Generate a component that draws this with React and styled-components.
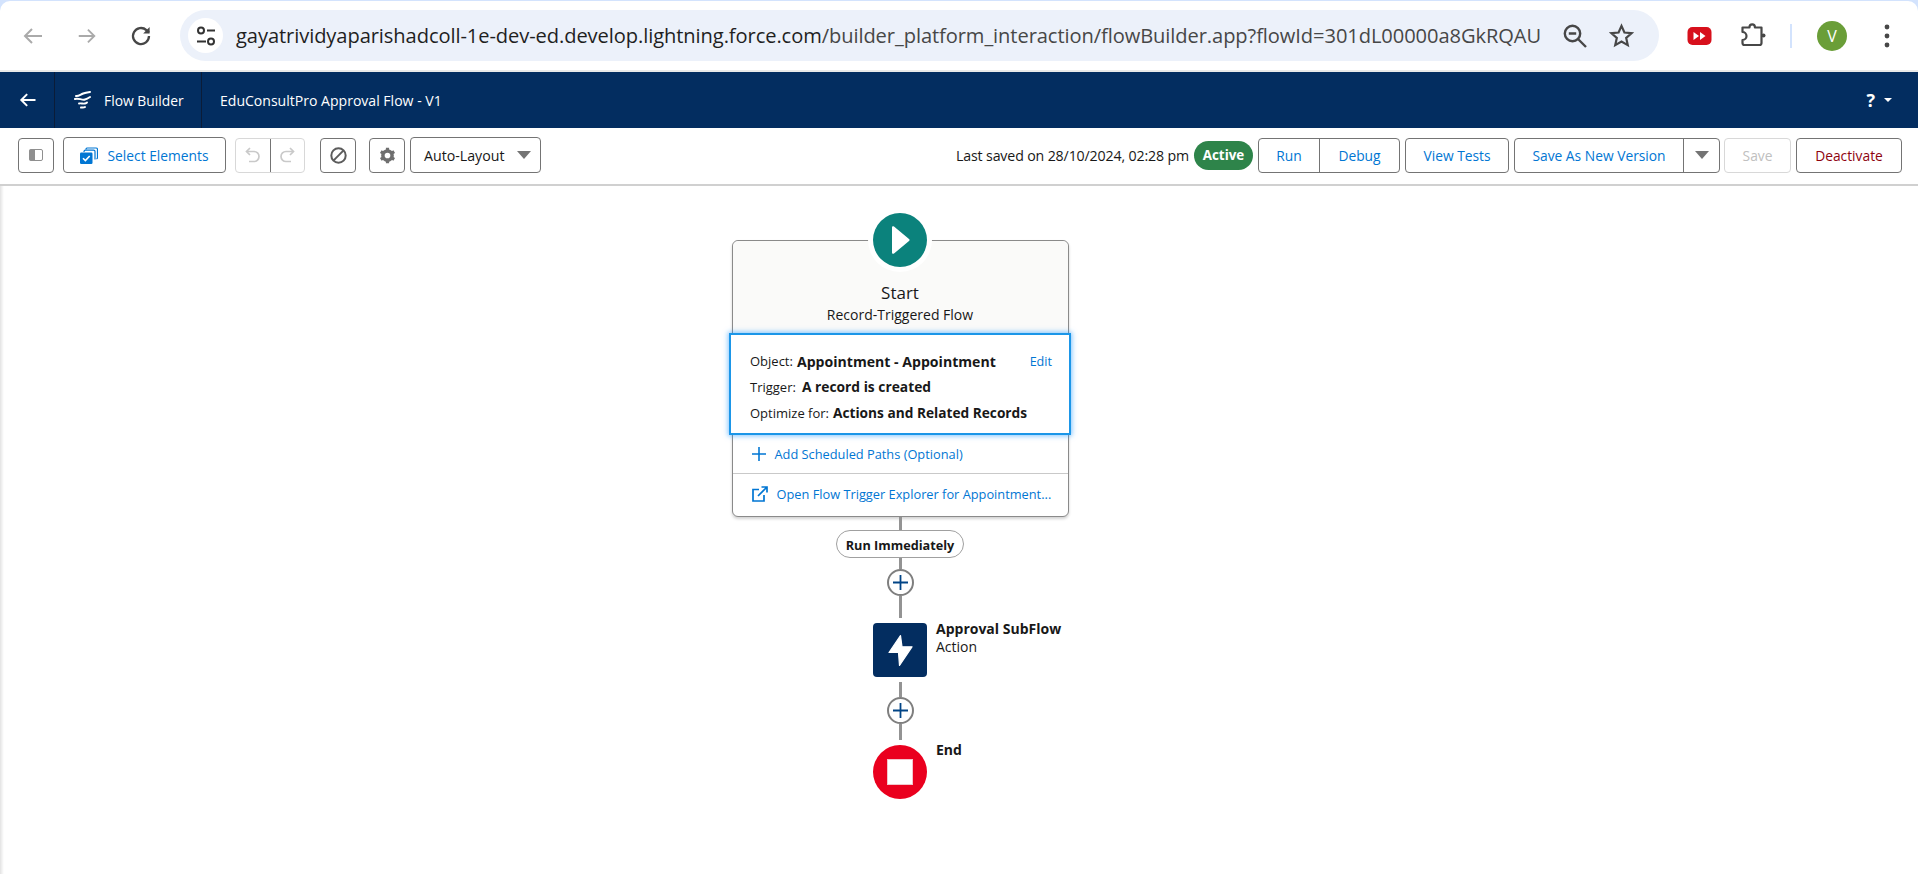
import React from "react";
import styled, { createGlobalStyle } from "styled-components";

const Global = createGlobalStyle`
  html, body { margin: 0; padding: 0; background: #fff; }
  body { font-family: "Open Sans", "Noto Sans", Arial, sans-serif; color: #181818; overflow: hidden; }
  * { box-sizing: border-box; }
`;

const Page = styled.div`
  width: 1918px; height: 874px; display: flex; flex-direction: column; background: #fff; overflow: hidden;
`;

/* ---------- browser chrome ---------- */
const Browser = styled.div`
  height: 72px; background: #d3e3fd; padding-top: 1px; flex: none;
`;
const BrowserInner = styled.div`
  height: 71px; background: #fff; border-radius: 10px 10px 0 0; border-bottom: 2px solid #e9e9e9;
  display: flex; align-items: flex-start; padding: 9px 0 0 0;
`;
const NavSlot = styled.div`
  width: 54px; height: 51px; display: flex; align-items: center; justify-content: center; flex: none;
  color: ${p => p.$color};
`;
const NavGroup = styled.div`
  display: flex; padding-left: 6px; width: 180px; flex: none;
`;
const Omnibox = styled.div`
  width: 1479px; height: 51px; border-radius: 26px; background: #ecf1fa; display: flex; align-items: center;
  padding-left: 8px; flex: none;
`;
const SiteChip = styled.div`
  width: 35px; height: 35px; border-radius: 50%; background: #fff; display: flex; align-items: center; justify-content: center; flex: none;
`;
const Url = styled.div`
  margin-left: 13px; font-size: 20.1px; color: #474747; white-space: nowrap; width: 1305px; flex: none; letter-spacing: -0.08px;
  b { font-weight: 400; color: #1f1f1f; }
`;
const OmniIcons = styled.div`
  display: flex; align-items: center; gap: 21px; margin-left: 21px;
`;
const ChromeIcons = styled.div`
  display: flex; align-items: center; height: 51px; margin-left: 28px; flex: none;
`;
const Spacer = styled.span`
  width: ${p => p.$w}px; flex: none;
`;
const Sep = styled.div`
  width: 2px; height: 24px; background: #d3e3fd; margin: 0 25px 0 24px;
`;
const Avatar = styled.div`
  width: 30px; height: 30px; border-radius: 50%; background: #6a9e38; color: #fff; font-size: 16px; display: flex; align-items: center; justify-content: center;
`;

/* ---------- navy app bar ---------- */
const AppBar = styled.div`
  height: 56px; background: #032d60; display: flex; align-items: stretch; color: #fff; flex: none; font-size: 13.85px;
`;
const BackCell = styled.div`
  width: 55px; border-right: 1px solid #0b1c38; display: flex; align-items: center; padding-left: 18px; flex: none;
`;
const BrandCell = styled.div`
  width: 147px; border-right: 1px solid #0b1c38; display: flex; align-items: center; padding-left: 19px; gap: 12px; flex: none; white-space: nowrap;
`;
const TitleCell = styled.div`
  flex: 1; display: flex; align-items: center; padding-left: 18px; white-space: nowrap; font-size: 14.05px;
`;
const Help = styled.div`
  display: flex; align-items: center; gap: 9px; padding-right: 26px; font-size: 18px; font-weight: 700;
`;
const Caret = styled.span`
  width: 0; height: 0; border-left: ${p => p.$s}px solid transparent; border-right: ${p => p.$s}px solid transparent;
  border-top: ${p => p.$h}px solid ${p => p.$c}; display: block;
`;

/* ---------- toolbar ---------- */
const Toolbar = styled.div`
  height: 58px; border-bottom: 2px solid #d0d0d0; display: flex; align-items: center; justify-content: space-between;
  padding: 0 16px 2px 18px; flex: none; background: #fff;
`;
const ToolGroup = styled.div`
  display: flex; align-items: center;
`;
const Btn = styled.div`
  height: ${p => p.$h || 35}px; width: ${p => p.$w}px; margin-left: ${p => p.$ml || 0}px;
  border: 1px solid ${p => (p.$disabled ? "#d8d8d8" : "#747474")}; border-radius: 4px; background: #fff;
  display: flex; align-items: center; justify-content: center; gap: ${p => p.$gap || 0}px; font-size: 13.8px; white-space: nowrap;
  color: ${p => p.$color || "#0176d3"}; flex: none;
`;
const BtnGroup = styled.div`
  display: flex; height: 35px; width: ${p => p.$w}px; margin-left: ${p => p.$ml || 0}px; flex: none;
  border: 1px solid ${p => (p.$disabled ? "#d8d8d8" : "#747474")}; border-radius: 4px; overflow: hidden;
`;
const GroupCell = styled.div`
  width: ${p => p.$w}px; flex: ${p => (p.$w ? "none" : "1")}; display: flex; align-items: center; justify-content: center; font-size: 13.8px;
  color: #0176d3; white-space: nowrap;
  & + & { border-left: 1px solid ${p => (p.$disabled ? "#d8d8d8" : "#747474")}; }
`;
const Combo = styled.div`
  width: 131px; height: 36px; margin-left: 5px; border: 1px solid #747474; border-radius: 4px; display: flex; align-items: center;
  justify-content: space-between; padding: 0 9px 0 13px; font-size: 14.2px; color: #181818; white-space: nowrap; flex: none;
`;
const Saved = styled.div`
  font-size: 14.2px; color: #181818; white-space: nowrap; margin-right: 5px; letter-spacing: -0.15px;
`;
const Badge = styled.div`
  width: 59px; height: 29px; border-radius: 15px; background: #2e844a; color: #fff; font-size: 13.4px; font-weight: 700;
  display: flex; align-items: center; justify-content: center; margin-right: 5px;
`;

/* ---------- canvas ---------- */
const Canvas = styled.div`
  flex: 1; position: relative; padding: 54px 0 0 729px;
  background: linear-gradient(90deg, #e2e2e2, #f2f2f2 2px, #fff 4px);
`;
const FlowColumn = styled.div`
  width: 342px; display: flex; flex-direction: column; align-items: center;
`;
const StartCard = styled.div`
  width: 337px; height: 277px; border: 1px solid #8a8a8a; border-radius: 6px; background: #fff; display: flex; flex-direction: column;
  box-shadow: 0 2px 3px rgba(0,0,0,.18); flex: none; align-items: stretch;
`;
const CardHead = styled.div`
  height: 92px; background: #fafaf9; border-radius: 6px 6px 0 0; display: flex; flex-direction: column; align-items: center; padding-top: 41px; flex: none;
`;
const StartCircle = styled.div`
  position: absolute; left: 873px; top: 27px; width: 54px; height: 54px; border-radius: 50%; background: #0b827c;
  box-shadow: 0 0 0 5px #fff; display: flex; align-items: center; justify-content: center;
`;
const CardTitle = styled.div`
  font-size: 17px; line-height: 22px;
`;
const CardSub = styled.div`
  font-size: 14px; line-height: 20px; margin-top: 1px;
`;
const Info = styled.div`
  width: 342px; height: 102px; margin: 0 -3.500px; background: #fff; border: 2px solid #1b96e8; box-shadow: 0 0 5px 1px rgba(27,150,255,.55);
  padding: 13px 17px 0 19px; font-size: 13px; display: flex; flex-direction: column; position: relative; flex: none;
`;
const InfoRow = styled.div`
  height: ${p => p.$h}px; display: flex; align-items: center; white-space: nowrap; gap: ${p => p.$gap}px; justify-content: flex-start;
`;
const InfoValue = styled.span`
  font-weight: 700; font-size: ${p => p.$s}px;
`;
const EditLink = styled.span`
  margin-left: auto; color: #0176d3; font-size: 12.6px;
`;
const LinkRow = styled.div`
  height: ${p => p.$h}px; display: flex; align-items: center; padding-left: 19px; gap: 9px; font-size: 12.8px; color: #0176d3; white-space: nowrap;
  border-top: ${p => (p.$border ? "1px solid #c9c9c9" : "none")}; flex: none;
`;
const Line = styled.div`
  width: 3px; height: ${p => p.$h}px; background: #939393; flex: none; margin-top: ${p => p.$mt || 0}px;
`;
const Pill = styled.div`
  width: 128px; height: 28px; border-radius: 14px; border: 1px solid #a0a0a0; background: #fff; font-size: 12.7px; font-weight: 700; padding-top: 1px;
  display: flex; align-items: center; justify-content: center; white-space: nowrap; flex: none;
`;
const PlusCircle = styled.div`
  width: 27px; height: 27px; border-radius: 50%; border: 2px solid #7f7f7f; background: #fff; display: flex; align-items: center; justify-content: center; flex: none;
`;
const NodeRow = styled.div`
  height: ${p => p.$h}px; width: 54px; position: relative; flex: none; margin-top: ${p => p.$mt || 0}px;
`;
const ActionIcon = styled.div`
  width: 54px; height: 54px; border-radius: 4px; background: #032d60; display: flex; align-items: center; justify-content: center;
`;
const EndIcon = styled.div`
  width: 54px; height: 54px; border-radius: 50%; background: #ea001e; display: flex; align-items: center; justify-content: center;
`;
const EndSquare = styled.div`
  width: 26px; height: 26px; background: #fff; border: 1px solid #f3c5cb;
`;
const NodeLabel = styled.div`
  position: absolute; left: 63px; top: ${p => p.$top}px; white-space: nowrap; font-size: 14px; line-height: 18px;
  strong { display: block; font-weight: 700; font-size: 14px; }
`;

const Back = ({ color = "currentColor", size = 22, w = 2 }) => (
  <svg width={size} height={size} viewBox="0 0 24 24" fill="none" stroke={color} strokeWidth={w}>
    <path d="M21 12H4M11 5l-7 7 7 7" />
  </svg>
);
const Forward = ({ color }) => (
  <svg width="22" height="22" viewBox="0 0 24 24" fill="none" stroke={color} strokeWidth="2">
    <path d="M3 12h17M13 5l7 7-7 7" />
  </svg>
);
const Reload = () => (
  <svg width="24" height="24" viewBox="0 0 24 24" fill="none" stroke="#474747" strokeWidth="2.3">
    <path d="M20 12a8 8 0 1 1-2.600-5.900L20 8.500" />
    <path d="M20.600 3v6.400h-6.400" fill="#474747" stroke="none" />
  </svg>
);
const Tune = () => (
  <svg width="24" height="24" viewBox="0 0 24 24" fill="none" stroke="#333" strokeWidth="2">
    <circle cx="7" cy="6.500" r="3" /><path d="M13 6.500h8M3 17.500h9" /><circle cx="17" cy="17.500" r="3" />
  </svg>
);
const ZoomOut = () => (
  <svg width="26" height="26" viewBox="0 0 26 26" fill="none" stroke="#474747" strokeWidth="2.400">
    <circle cx="10.500" cy="10.500" r="7.700" /><path d="M6.800 10.500h7.400M16 16l8 8" />
  </svg>
);
const Star = () => (
  <svg width="25" height="25" viewBox="0 0 24 24" fill="none" stroke="#474747" strokeWidth="2.100">
    <path d="M12 2.800l2.800 6.300 6.800.7-5.100 4.600 1.500 6.800-6-3.500-6 3.500 1.500-6.800-5.100-4.600 6.800-.7z" />
  </svg>
);
const RedExt = () => (
  <svg width="25" height="20" viewBox="0 0 25 20">
    <rect x="0.500" y="1" width="24" height="18" rx="5" fill="#d7101c" />
    <path d="M6.500 6l5.500 4-5.500 4zM13 6l5.500 4-5.500 4z" fill="#fff" />
  </svg>
);
const Puzzle = () => (
  <svg width="25" height="25" viewBox="0 0 25 25" fill="none" stroke="#474747" strokeWidth="2.200" strokeLinejoin="round">
    <path d="M1.500 4.500H8.500V4a2.700 2.700 0 0 1 5.400 0v.5H20.500V20a2 2 0 0 1-2 2H3.500a2 2 0 0 1-2-2V17a4 4 0 0 0 0-8z" />
    <circle cx="22.500" cy="12.500" r="2" fill="#474747" stroke="none" />
  </svg>
);
const Dots = () => (
  <svg width="8" height="26" viewBox="0 0 8 26" fill="#474747">
    <circle cx="4" cy="4" r="2.400" /><circle cx="4" cy="13" r="2.400" /><circle cx="4" cy="22" r="2.400" />
  </svg>
);
const FlowLogo = () => (
  <svg width="18" height="18" viewBox="0 0 18 18" fill="none" stroke="#fff" strokeLinecap="round">
    <path d="M2 5c2 .2 3-.5 6-2 2-1 5-1.500 8-2" strokeWidth="2" />
    <path d="M1 8c3-1.500 7 1.500 10 .5 2-.5 3.500-1.500 5-2.500" strokeWidth="2" />
    <path d="M5 12.500c2-.5 4 .5 6 0 .8-.2 1.500-.5 2-1" strokeWidth="1.900" />
    <path d="M7 16.500c1.500-.2 3 .2 4-.5" strokeWidth="2" />
  </svg>
);
const PanelIcon = () => (
  <svg width="14" height="12" viewBox="0 0 14 12">
    <rect x="0.500" y="0.500" width="13" height="11" rx="1.500" fill="none" stroke="#8f8f8f" />
    <rect x="0.500" y="0.500" width="5.500" height="11" fill="#8f8f8f" />
  </svg>
);
const SelectIcon = () => (
  <svg width="18" height="17" viewBox="0 0 18 17">
    <path d="M6 2.600V2a1.400 1.400 0 0 1 1.400-1H16a1.500 1.500 0 0 1 1.500 1.500v8a1.500 1.500 0 0 1-1 1.400" fill="none" stroke="#0176d3" strokeWidth="1.200" />
    <path d="M4 5V4.500A1.400 1.400 0 0 1 5.400 3.200h8.200a1.400 1.400 0 0 1 1.400 1.400v8" fill="none" stroke="#0176d3" strokeWidth="1.200" />
    <rect x="0" y="5.500" width="12.500" height="11.500" rx="1.200" fill="#0176d3" />
    <path d="M3 11.200l2.400 2.400 4.300-4.600" fill="none" stroke="#fff" strokeWidth="1.600" />
  </svg>
);
const Undo = ({ flip }) => (
  <svg width="15" height="16" viewBox="0 0 15 16" fill="none" stroke="#c9c9c9" strokeWidth="1.700" style={flip ? { transform: "scaleX(-1)" } : undefined}>
    <path d="M5 1L1.500 4.500 5 8" /><path d="M2 4.500h7a4.600 4.600 0 0 1 0 10H4" />
  </svg>
);
const Ban = () => (
  <svg width="17" height="17" viewBox="0 0 17 17" fill="none" stroke="#5c5c5c" strokeWidth="2">
    <circle cx="8.500" cy="8.500" r="7.200" /><path d="M13.600 3.400L3.400 13.600" />
  </svg>
);
const Gear = () => (
  <svg width="17" height="17" viewBox="0 0 24 24" fill="none" stroke="#6f6f6f">
    <circle cx="12" cy="12" r="6.500" strokeWidth="5" />
    <path d="M12 1v5M12 18v5M2.500 6.500l4.300 2.500M17.200 15l4.300 2.500M2.500 17.500l4.300-2.500M17.200 9l4.300-2.500" strokeWidth="4.500" />
  </svg>
);
const Play = () => (
  <svg width="26" height="32" viewBox="0 0 26 32"><path d="M5 3.500c0-1.200 1-1.500 2-1l15 12.500c.8.600.8 1.400 0 2L7 29.500c-1 .6-2 .2-2-1z" fill="#fff" /></svg>
);
const PlusThin = ({ color, size = 16, w = 2 }) => (
  <svg width={size} height={size} viewBox="0 0 16 16" stroke={color} strokeWidth={w}>
    <path d="M8 0v16M0 8h16" />
  </svg>
);
const External = () => (
  <svg width="16" height="16" viewBox="0 0 16 16" fill="none" stroke="#0176d3" strokeWidth="1.700">
    <path d="M7 3.500H1v11.500h11V9" /><path d="M6 10L14.500 1.500M9.500 1h5.500v5.500" />
  </svg>
);
const Bolt = () => (
  <svg width="25" height="33" viewBox="0 0 25 33">
    <path d="M12.500 1.500L1 18.500H10.500L11.500 31.500 24 12.800H14z" fill="#fff" stroke="#fff" strokeWidth="1.200" strokeLinejoin="round" />
  </svg>
);

export default function App() {
  return (
    <Page>
      <Global />
      <Browser>
        <BrowserInner>
          <NavGroup>
            <NavSlot $color="#aaa"><Back size={24} /></NavSlot>
            <NavSlot $color="#aaa"><Forward color="#aaa" /></NavSlot>
            <NavSlot $color="#474747"><Reload /></NavSlot>
          </NavGroup>
          <Omnibox>
            <SiteChip><Tune /></SiteChip>
            <Url><b>gayatrividyaparishadcoll-1e-dev-ed.develop.lightning.force.com</b>/builder_platform_interaction/flowBuilder.app?flowId=301dL00000a8GkRQAU</Url>
            <OmniIcons><ZoomOut /><Star /></OmniIcons>
          </Omnibox>
          <ChromeIcons>
            <RedExt />
            <Spacer $w={29} />
            <Puzzle />
            <Sep />
            <Avatar>V</Avatar>
            <Spacer $w={36} />
            <Dots />
          </ChromeIcons>
        </BrowserInner>
      </Browser>
      <AppBar>
        <BackCell><Back color="#fff" size={20} w={2.4} /></BackCell>
        <BrandCell><FlowLogo />Flow Builder</BrandCell>
        <TitleCell>EduConsultPro Approval Flow - V1</TitleCell>
        <Help>?<Caret $s={4} $h={4} $c="#fff" /></Help>
      </AppBar>
      <Toolbar>
        <ToolGroup>
          <Btn $w={36}><PanelIcon /></Btn>
          <Btn $w={163} $ml={9} $gap={9} $h={36}><SelectIcon />Select Elements</Btn>
          <BtnGroup $w={70} $ml={9} $disabled>
            <GroupCell $disabled><Undo /></GroupCell>
            <GroupCell $disabled><Undo flip /></GroupCell>
          </BtnGroup>
          <Btn $w={36} $ml={15}><Ban /></Btn>
          <Btn $w={36} $ml={13}><Gear /></Btn>
          <Combo>Auto-Layout<Caret $s={7} $h={8} $c="#747474" /></Combo>
        </ToolGroup>
        <ToolGroup>
          <Saved>Last saved on 28/10/2024, 02:28 pm</Saved>
          <Badge>Active</Badge>
          <BtnGroup $w={142}>
            <GroupCell $w={60}>Run</GroupCell>
            <GroupCell>Debug</GroupCell>
          </BtnGroup>
          <Btn $w={104} $ml={5}>View Tests</Btn>
          <BtnGroup $w={206} $ml={5}>
            <GroupCell>Save As New Version</GroupCell>
            <GroupCell $w={36}><Caret $s={7} $h={8} $c="#747474" /></GroupCell>
          </BtnGroup>
          <Btn $w={67} $ml={4} $disabled $color="#c0c0c0">Save</Btn>
          <Btn $w={106} $ml={5} $color="#8e030f">Deactivate</Btn>
        </ToolGroup>
      </Toolbar>
      <Canvas>
        <StartCircle><Play /></StartCircle>
        <FlowColumn>
          <StartCard>
            <CardHead>
              <CardTitle>Start</CardTitle>
              <CardSub>Record-Triggered Flow</CardSub>
            </CardHead>
            <Info>
              <InfoRow $h={26} $gap={4}>Object: <InfoValue $s={14.1}>Appointment - Appointment</InfoValue><EditLink>Edit</EditLink></InfoRow>
              <InfoRow $h={25} $gap={6}>Trigger: <InfoValue $s={13.8}>A record is created</InfoValue></InfoRow>
              <InfoRow $h={27} $gap={4}>Optimize for: <InfoValue $s={13.7}>Actions and Related Records</InfoValue></InfoRow>
            </Info>
            <LinkRow $h={38}><PlusThin color="#0176d3" size={14} w={1.8} />Add Scheduled Paths (Optional)</LinkRow>
            <LinkRow $h={40} $border><External />Open Flow Trigger Explorer for Appointment...</LinkRow>
          </StartCard>
          <Line $h={13} />
          <Pill>Run Immediately</Pill>
          <Line $h={11} />
          <PlusCircle><PlusThin color="#014486" size={15} w={1.9} /></PlusCircle>
          <Line $h={22} />
          <NodeRow $h={54} $mt={5}>
            <ActionIcon><Bolt /></ActionIcon>
            <NodeLabel $top={-3}><strong>Approval SubFlow</strong>Action</NodeLabel>
          </NodeRow>
          <Line $h={15} $mt={5} />
          <PlusCircle><PlusThin color="#014486" size={15} w={1.9} /></PlusCircle>
          <Line $h={16} />
          <NodeRow $h={54} $mt={5}>
            <EndIcon><EndSquare /></EndIcon>
            <NodeLabel $top={-4}><strong>End</strong></NodeLabel>
          </NodeRow>
        </FlowColumn>
      </Canvas>
    </Page>
  );
}
